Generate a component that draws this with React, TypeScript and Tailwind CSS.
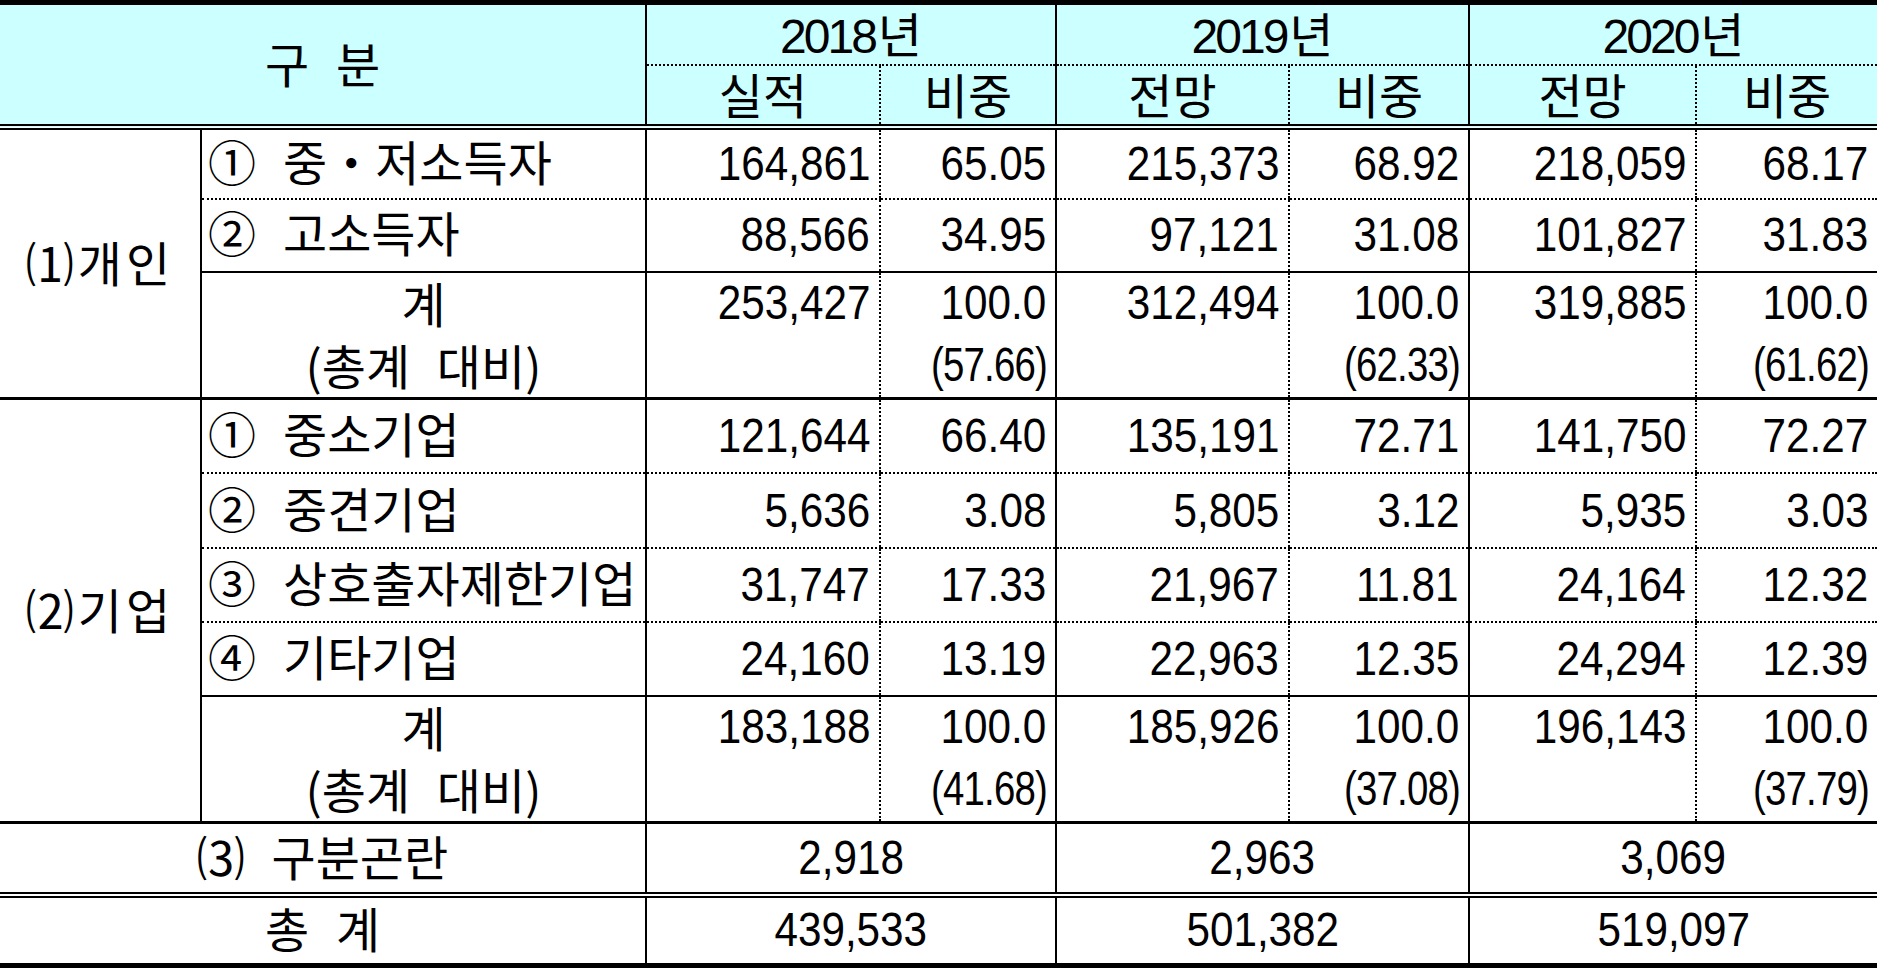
const KR = "font-['Noto_Sans_CJK_KR',sans-serif]";
const NUM = "font-['Liberation_Sans','Noto_Sans_CJK_KR',sans-serif]";

const solidL = 'border-l-2 border-black';
const dotL = 'border-l-2 border-black [border-left-style:dotted]';
const dotB = 'border-b-2 [border-bottom-style:dotted]';
const solidB = 'border-b-2';
const thickB = 'border-b-[3px]';
const dblB = 'border-b-[6px] [border-bottom-style:double]';

interface Item {
    no: string;
    name: string;
    v: string[];
}

interface Total {
    v: [string, string, string][];
}

const personal: Item[] = [
    { no: '①', name: '중・저소득자', v: ['164,861', '65.05', '215,373', '68.92', '218,059', '68.17'] },
    { no: '②', name: '고소득자', v: ['88,566', '34.95', '97,121', '31.08', '101,827', '31.83'] },
];
const personalTotal: Total = {
    v: [
        ['253,427', '100.0', '(57.66)'],
        ['312,494', '100.0', '(62.33)'],
        ['319,885', '100.0', '(61.62)'],
    ],
};

const corp: Item[] = [
    { no: '①', name: '중소기업', v: ['121,644', '66.40', '135,191', '72.71', '141,750', '72.27'] },
    { no: '②', name: '중견기업', v: ['5,636', '3.08', '5,805', '3.12', '5,935', '3.03'] },
    { no: '③', name: '상호출자제한기업', v: ['31,747', '17.33', '21,967', '11.81', '24,164', '12.32'] },
    { no: '④', name: '기타기업', v: ['24,160', '13.19', '22,963', '12.35', '24,294', '12.39'] },
];
const corpTotal: Total = {
    v: [
        ['183,188', '100.0', '(41.68)'],
        ['185,926', '100.0', '(37.08)'],
        ['196,143', '100.0', '(37.79)'],
    ],
};

const years = ['2018', '2019', '2020'];
const subs = ['실적', '비중', '전망', '비중', '전망', '비중'];

// condensed digits, hugging the right edge of the cell
function Num({ children }: { children: React.ReactNode }) {
    return <span className="inline-block scale-x-[0.88] origin-right">{children}</span>;
}

function ItemRow({ item, last, group, height }: { item: Item; last: boolean; group?: React.ReactNode; height: string }) {
    const b = last ? solidB : dotB;
    return (
        <tr className={height}>
            {group}
            <td className={`${KR} ${solidL} ${b} border-black pl-[6px] pb-[8px] text-left whitespace-nowrap`}>
                <span className="mr-[27px]">{item.no}</span>
                <span>{item.name}</span>
            </td>
            {item.v.map((val, i) => (
                <td key={i} className={`${NUM} ${i % 2 === 0 ? solidL : dotL} ${b} border-black text-right pr-[9px]`}>
                    <Num>{val}</Num>
                </td>
            ))}
        </tr>
    );
}

function TotalRow({ total }: { total: Total }) {
    return (
        <tr className="h-[125px]">
            <td className={`${KR} ${solidL} ${thickB} border-black p-0 align-top`}>
                <div className="flex flex-col items-center">
                    <div className="h-[60px] pb-[2px] flex items-center">계</div>
                    <div className="h-[64px] pb-[2px] flex items-center [word-spacing:16px]">(총계 대비)</div>
                </div>
            </td>
            {total.v.map(([amt, pct, share], i) => [
                <td key={`a${i}`} className={`${NUM} ${solidL} ${thickB} border-black p-0 align-top`}>
                    <div className="h-[60px] flex items-center justify-end pr-[9px]">
                        <Num>{amt}</Num>
                    </div>
                </td>,
                <td key={`p${i}`} className={`${NUM} ${dotL} ${thickB} border-black p-0 align-top`}>
                    <div className="h-[60px] flex items-center justify-end pr-[9px]">
                        <Num>{pct}</Num>
                    </div>
                    <div className="h-[64px] flex items-center justify-end pr-[8px]">
                        <span className="inline-block scale-x-[0.8] origin-right tracking-[-1px]">{share}</span>
                    </div>
                </td>,
            ])}
        </tr>
    );
}

export default function App() {
    const itemHeights = ['h-[72px]', 'h-[73px]'];
    const corpHeights = ['h-[75px]', 'h-[75px]', 'h-[74px]', 'h-[74px]'];

    return (
        <div className="w-[1877px] h-[969px] bg-white overflow-hidden text-black">
            <table className="w-[1877px] table-fixed border-collapse border-t-[5px] border-b-[5px] border-black text-[48px] leading-none">
                <colgroup>
                    <col className="w-[201px]" />
                    <col className="w-[445px]" />
                    <col className="w-[234px]" />
                    <col className="w-[176px]" />
                    <col className="w-[233px]" />
                    <col className="w-[180px]" />
                    <col className="w-[227px]" />
                    <col className="w-[181px]" />
                </colgroup>
                <thead>
                    <tr className="h-[62px] bg-[#ccffff]">
                        <th colSpan={2} rowSpan={2} className={`${KR} ${dblB} border-black font-normal pb-[4px] [word-spacing:16px]`}>
                            구 분
                        </th>
                        {years.map((y) => (
                            <th key={y} colSpan={2} className={`${NUM} ${solidL} ${dotB} border-black font-normal`}>
                                <span className="tracking-[-3px] mr-[3px]">{y}</span>
                                <span className={KR}>년</span>
                            </th>
                        ))}
                    </tr>
                    <tr className="h-[62px] bg-[#ccffff]">
                        {subs.map((s, i) => (
                            <th key={i} className={`${KR} ${i % 2 === 0 ? solidL : dotL} ${dblB} border-black font-normal pb-[4px]`}>
                                {s}
                            </th>
                        ))}
                    </tr>
                </thead>
                <tbody>
                    {/* (1) 개인 */}
                    {personal.map((item, i) => (
                        <ItemRow
                            key={item.name}
                            item={item}
                            last={i === personal.length - 1}
                            height={itemHeights[i]}
                            group={
                                i === 0 ? (
                                    <td rowSpan={3} className={`${KR} ${thickB} border-black text-center pb-[4px] tracking-[4px]`}>
                                        ⑴개인
                                    </td>
                                ) : undefined
                            }
                        />
                    ))}
                    <TotalRow total={personalTotal} />

                    {/* (2) 기업 */}
                    {corp.map((item, i) => (
                        <ItemRow
                            key={item.name}
                            item={item}
                            last={i === corp.length - 1}
                            height={corpHeights[i]}
                            group={
                                i === 0 ? (
                                    <td rowSpan={5} className={`${KR} ${thickB} border-black text-center pb-[4px] tracking-[4px]`}>
                                        ⑵기업
                                    </td>
                                ) : undefined
                            }
                        />
                    ))}
                    <TotalRow total={corpTotal} />

                    {/* (3) 구분곤란 */}
                    <tr className="h-[72px]">
                        <td colSpan={2} className={`${KR} ${dblB} border-black text-center pb-[6px] [word-spacing:16px]`}>
                            ⑶ 구분곤란
                        </td>
                        {['2,918', '2,963', '3,069'].map((v) => (
                            <td key={v} colSpan={2} className={`${NUM} ${solidL} ${dblB} border-black text-center`}>
                                <span className="inline-block scale-x-[0.88]">{v}</span>
                            </td>
                        ))}
                    </tr>
                    <tr className="h-[71px]">
                        <td colSpan={2} className={`${KR} text-center pb-[6px] [word-spacing:16px]`}>
                            총 계
                        </td>
                        {['439,533', '501,382', '519,097'].map((v) => (
                            <td key={v} colSpan={2} className={`${NUM} ${solidL} border-black text-center`}>
                                <span className="inline-block scale-x-[0.88]">{v}</span>
                            </td>
                        ))}
                    </tr>
                </tbody>
            </table>
        </div>
    );
}
